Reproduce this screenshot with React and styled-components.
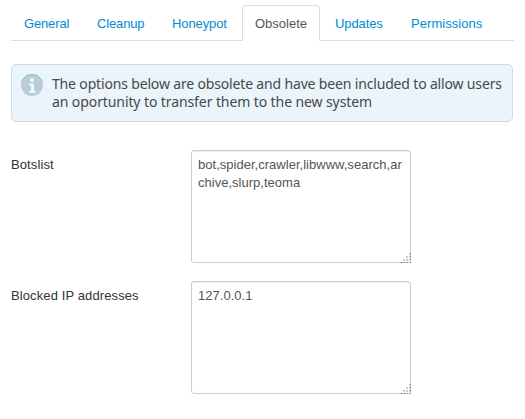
import React from "react";
import styled, { createGlobalStyle } from "styled-components";

const Global = createGlobalStyle`
  * { box-sizing: border-box; }
  body { margin: 0; background: #fff; color: #333; font: 13px/18px "Liberation Sans", Arial, sans-serif; }
`;
const Page = styled.main`
  width: 525px; height: 419px; padding: 5px 12px 0 11px; overflow: hidden;
`;
const Tabs = styled.nav`
  display: flex; height: 36px; border-bottom: 1px solid #ddd; margin-right: -1px; margin-bottom: 23px;
`;
const Tab = styled.a`
  flex: none; width: ${p => p.$width}px; height: 36px; padding: 9px 0 0 12px; margin-right: 2px;
  white-space: nowrap; letter-spacing: ${p => p.$spacing}px;
  border: 1px solid ${p => (p.$active ? "#ddd" : "transparent")};
  border-bottom-color: ${p => (p.$active ? "#fff" : "transparent")};
  border-radius: 4px 4px 0 0;
  color: ${p => (p.$active ? "#555" : "#008bd2")};
`;
const Notice = styled.section`
  display: flex; height: 58px; padding: 9px 0 0 9px; gap: 9px; margin-bottom: 28px;
  background: #eaf4fa; border: 1px solid #cfdbe1; border-radius: 5px;
  color: #484848; font: 14px/18px "Noto Sans", sans-serif;
`;
const InfoIcon = styled.svg`flex: none; width: 22px; height: 22px;`;
const NoticeText = styled.p`margin: 1px 0 0; white-space: nowrap;`;
const Line = styled.span`display: block; letter-spacing: ${p => p.$spacing}px;`;
const Row = styled.div`display: flex; height: 113px; margin-bottom: 18px;`;
const Label = styled.label`width: 180px; padding-top: 6px; letter-spacing: 0.11px;`;
const Field = styled.div`position: relative; width: 220px; height: 113px;`;
const Area = styled.textarea`
  display: block; width: 220px; height: 113px; margin: 0; padding: 5px 6px 3px; resize: none; outline: 0;
  font: 13px/18px "Liberation Sans", Arial, sans-serif; color: #555; letter-spacing: 0.02px;
  border: 1px solid #ccc; border-radius: 3px; box-shadow: inset 0 1px 1px rgba(0,0,0,.075);
`;
const Grip = styled.svg`position: absolute; right: 0; bottom: 0; width: 11px; height: 11px;`;

const tabs = [
  { name: "General", width: 71, spacing: -0.15 },
  { name: "Cleanup", width: 73, spacing: -0.15 },
  { name: "Honeypot", width: 81, spacing: -0.1 },
  { name: "Obsolete", width: 78, spacing: 0 },
  { name: "Updates", width: 74, spacing: -0.1 },
  { name: "Permissions", width: 96, spacing: 0.05 },
];
const dots = [[9, 1], [6, 4], [9, 4], [3, 7], [6, 7], [9, 7]];
const edgeDots = [[1, 10], [4, 10], [7, 10], [10, 10], [10, 1], [10, 4], [10, 7]];

function TextField({ label, value }) {
  return (
    <Row>
      <Label>{label}</Label>
      <Field>
        <Area defaultValue={value} spellCheck={false} />
        <Grip viewBox="0 0 11 11" shapeRendering="crispEdges">
          {dots.map(([x, y]) => <rect key={`${x}-${y}`} x={x} y={y} width="2" height="2" fill="#ccc" />)}
          {edgeDots.map(([x, y]) => <rect key={`e${x}-${y}`} x={x} y={y} width="1" height="1" fill="#777" />)}
        </Grip>
      </Field>
    </Row>
  );
}

export default function App() {
  return (
    <Page>
      <Global />
      <Tabs>
        {tabs.map(t => (
          <Tab key={t.name} $active={t.name === "Obsolete"} $width={t.width} $spacing={t.spacing}>{t.name}</Tab>
        ))}
      </Tabs>
      <Notice>
        <InfoIcon viewBox="0 0 22 22">
          <circle cx="11" cy="11" r="11" fill="#b7cdda" />
          <path d="M.7 9A10.5 10.5 0 0 1 21.3 9" fill="none" stroke="#9dbccc" strokeWidth="1" />
          <circle cx="11" cy="6" r="2.1" fill="#f4fafd" />
          <path d="M8 9.5h5V17h1.5v1.7H8V17h2v-5.8H8z" fill="#f4fafd" />
        </InfoIcon>
        <NoticeText>
          <Line $spacing={-0.162}>The options below are obsolete and have been included to allow users</Line>
          <Line $spacing={-0.095}>an oportunity to transfer them to the new system</Line>
        </NoticeText>
      </Notice>
      <TextField label="Botslist" value="bot,spider,crawler,libwww,search,archive,slurp,teoma" />
      <TextField label="Blocked IP addresses" value="127.0.0.1" />
    </Page>
  );
}
